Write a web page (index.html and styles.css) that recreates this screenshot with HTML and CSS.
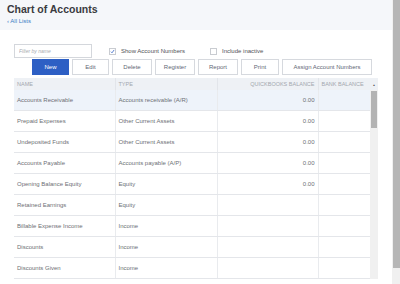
FILE: index.html
```html
<!DOCTYPE html>
<html lang="en">
<head>
  <meta charset="UTF-8">
  <meta name="viewport" content="width=device-width, initial-scale=1.0">
  <title>Chart of Accounts</title>
  <link rel="stylesheet" href="styles.css">
</head>
<body>
  <div class="page">
    <div class="main">
      <!-- Title bar -->
      <div class="top">
        <h1>Chart of Accounts</h1>
        <a class="back" href="#">&lsaquo; All Lists</a>
      </div>

      <!-- Filter row -->
      <div class="filters">
        <input class="filter" type="text" placeholder="Filter by name">
        <label class="check show-numbers">
          <span class="box">
            <svg width="7" height="7" viewBox="0 0 7 7"><path d="M1.3 3.8 L2.8 5.3 L5.8 1.3" fill="none" stroke="#2d5fc4" stroke-width="1.1"/></svg>
          </span>
          Show Account Numbers
        </label>
        <label class="check inactive">
          <span class="box"></span>
          Include inactive
        </label>
      </div>

      <!-- Action buttons -->
      <div class="actions">
        <button class="btn primary w-new">New</button>
        <button class="btn w-edit">Edit</button>
        <button class="btn w-mid">Delete</button>
        <button class="btn w-mid">Register</button>
        <button class="btn w-mid">Report</button>
        <button class="btn w-print">Print</button>
        <button class="btn w-assign">Assign Account Numbers</button>
      </div>

      <!-- Accounts list -->
      <div class="grid-wrap">
        <table class="accounts">
          <colgroup>
            <col class="c-name">
            <col class="c-type">
            <col class="c-qb">
            <col class="c-bank">
          </colgroup>
          <thead>
            <tr>
              <th>NAME</th>
              <th>TYPE</th>
              <th class="num">QUICKBOOKS BALANCE</th>
              <th>BANK BALANCE</th>
            </tr>
          </thead>
          <tbody>
            <tr class="selected"><td>Accounts Receivable</td><td>Accounts receivable (A/R)</td><td class="num">0.00</td><td></td></tr>
            <tr><td>Prepaid Expenses</td><td>Other Current Assets</td><td class="num">0.00</td><td></td></tr>
            <tr><td>Undeposited Funds</td><td>Other Current Assets</td><td class="num">0.00</td><td></td></tr>
            <tr><td>Accounts Payable</td><td>Accounts payable (A/P)</td><td class="num">0.00</td><td></td></tr>
            <tr><td>Opening Balance Equity</td><td>Equity</td><td class="num">0.00</td><td></td></tr>
            <tr><td>Retained Earnings</td><td>Equity</td><td class="num"></td><td></td></tr>
            <tr><td>Billable Expense Income</td><td>Income</td><td class="num"></td><td></td></tr>
            <tr><td>Discounts</td><td>Income</td><td class="num"></td><td></td></tr>
            <tr><td>Discounts Given</td><td>Income</td><td class="num"></td><td></td></tr>
          </tbody>
        </table>
        <div class="vscroll">
          <div class="vscroll-head">&#9650;</div>
          <div class="vscroll-track"><div class="vscroll-thumb"></div></div>
        </div>
      </div>
    </div>

    <!-- Window scrollbar -->
    <div class="page-scroll"><div class="page-thumb"></div></div>
  </div>
</body>
</html>
```

FILE: styles.css
```css
/* General */
body {
  margin: 0;
  padding: 0;
  font-family: "Liberation Sans", Arial, sans-serif;
  background-color: white;
  overflow: hidden;
}

.page {
  display: flex;
  width: 400px;
  height: 284px;
}

.main {
  flex: 1;
  min-width: 0;
}

/* Title bar */
.top {
  height: 30px;
  box-sizing: border-box;
  padding: 3px 7px 0 7px;
  background-color: #f5f7fa;
}

.top h1 {
  margin: 0;
  font-size: 10.5px;
  line-height: 13px;
  font-weight: bold;
  color: #3a3b3f;
}

.back {
  display: block;
  margin-top: 1px;
  font-size: 6px;
  line-height: 8px;
  color: #3c7dc4;
  text-decoration: none;
}

/* Filter row */
.filters {
  display: flex;
  align-items: center;
  margin-top: 14px;
  padding-left: 14px;
  height: 14px;
}

.filter {
  width: 78px;
  height: 14px;
  box-sizing: border-box;
  border: 1px solid #d4d7dc;
  padding: 0 4px;
  font-family: inherit;
  font-size: 5px;
  color: #555;
}

.filter::placeholder {
  color: #a9abb0;
  font-style: italic;
}

.check {
  display: flex;
  align-items: center;
  gap: 5px;
  font-size: 6px;
  color: #505156;
}

.show-numbers {
  margin-left: 17px;
}

.inactive {
  margin-left: 25px;
}

.box {
  width: 7px;
  height: 7px;
  box-sizing: border-box;
  border: 1px solid #c9ccd1;
  background-color: white;
  display: flex;
  align-items: center;
  justify-content: center;
}

.box svg {
  display: block;
}

/* Action buttons */
.actions {
  display: flex;
  gap: 3px;
  margin-top: 1px;
  padding-left: 32px;
}

.btn {
  height: 16px;
  padding: 0;
  border: 1px solid #d6d9de;
  background-color: white;
  color: #5f6775;
  font-family: inherit;
  font-size: 6px;
}

.btn.primary {
  background-color: #2d5fc4;
  border-color: #2d5fc4;
  color: white;
}

.w-new { width: 37px; }
.w-edit { width: 37px; }
.w-mid { width: 40px; }
.w-print { width: 38px; }
.w-assign { width: 90px; }

/* Accounts list */
.grid-wrap {
  display: flex;
  margin-top: 3px;
  margin-left: 14px;
  width: 364px;
}

.accounts {
  width: 356px;
  border-collapse: collapse;
  table-layout: fixed;
}

.c-name { width: 101px; }
.c-type { width: 102px; }
.c-qb { width: 101px; }
.c-bank { width: 52px; }

.accounts th {
  height: 12px;
  padding: 0 3px;
  background-color: #eef1f5;
  border-left: 1px solid #e2e5ea;
  color: #a3a7ae;
  font-size: 5.5px;
  font-weight: normal;
  text-align: left;
  white-space: nowrap;
  overflow: hidden;
}

.accounts td {
  height: 20px;
  padding: 0 3px;
  border-bottom: 1px solid #e4e6ea;
  border-left: 1px solid #e9ebee;
  color: #6d6f75;
  font-size: 6px;
  white-space: nowrap;
  overflow: hidden;
}

.accounts th:first-child,
.accounts td:first-child {
  border-left: none;
}

.accounts .num {
  text-align: right;
}

.accounts tr.selected td {
  background-color: #eef3fa;
}

/* Grid scrollbar */
.vscroll {
  width: 8px;
  display: flex;
  flex-direction: column;
}

.vscroll-head {
  height: 12px;
  background-color: #eef1f5;
  color: #555;
  font-size: 3px;
  line-height: 14px;
  text-align: center;
}

.vscroll-track {
  flex: 1;
  background-color: #f0f0f0;
  padding: 1px 1px 0 1px;
}

.vscroll-thumb {
  height: 37px;
  background-color: #b3b3b3;
}

/* Window scrollbar */
.page-scroll {
  width: 8px;
  background-color: #f0f0f0;
  display: flex;
  justify-content: flex-end;
}

.page-thumb {
  width: 7px;
  height: 268px;
  background-color: #b6b6b6;
}
```
